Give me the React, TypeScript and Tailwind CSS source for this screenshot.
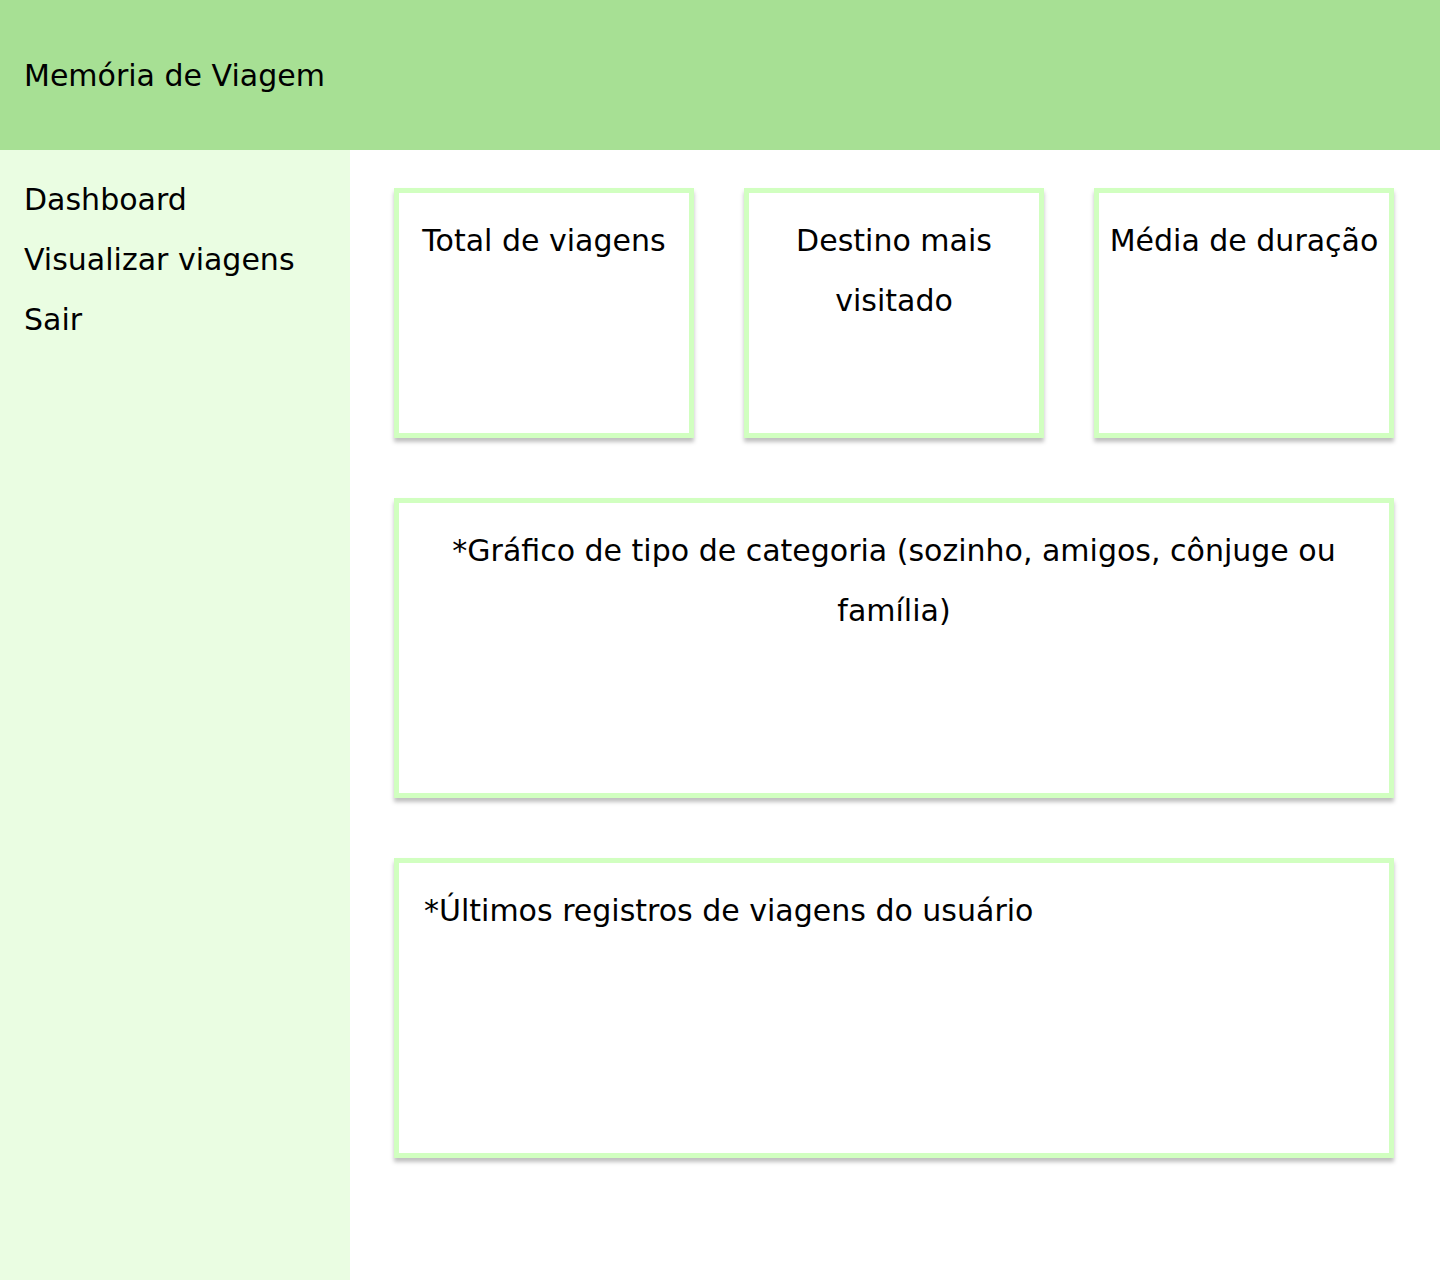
const cardBase =
  'bg-white border-[5px] border-[#d1ffc0] shadow-[0_4px_4px_rgba(0,0,0,0.25)]';

function StatCard({ title }: { title: string }) {
  return (
    <div className={`${cardBase} w-[300px] h-[250px] px-1 pt-[18px] text-center`}>
      <p className="text-[30px] leading-[60px]">{title}</p>
    </div>
  );
}

export default function App() {
  const navItems = ['Dashboard', 'Visualizar viagens', 'Sair'];

  return (
    <div
      className="min-h-[1280px] flex flex-col text-black"
      style={{ fontFamily: '"DejaVu Sans", "Noto Sans", sans-serif' }}
    >
      {/* Header */}
      <header className="h-[150px] bg-[#a7e094] flex items-center px-6 shrink-0">
        <h1 className="text-[30px] font-normal">Memória de Viagem</h1>
      </header>

      <div className="flex flex-1">
        {/* Sidebar */}
        <aside className="w-[350px] bg-[#eafde2] pt-5 px-6 shrink-0">
          <nav className="flex flex-col">
            {navItems.map((item) => (
              <a key={item} href="#" className="text-[30px] leading-[60px]">
                {item}
              </a>
            ))}
          </nav>
        </aside>

        {/* Main */}
        <main className="flex-1 pl-[44px] pt-[38px]">
          <div className="w-[1000px] flex flex-col gap-[60px]">
            <div className="flex justify-between">
              <StatCard title="Total de viagens" />
              <StatCard title="Destino mais visitado" />
              <StatCard title="Média de duração" />
            </div>

            <div className={`${cardBase} h-[300px] px-[45px] pt-[18px] text-center`}>
              <p className="text-[30px] leading-[60px]">
                *Gráfico de tipo de categoria (sozinho, amigos, cônjuge ou família)
              </p>
            </div>

            <div className={`${cardBase} h-[300px] px-[25px] pt-[18px]`}>
              <p className="text-[30px] leading-[60px]">
                *Últimos registros de viagens do usuário
              </p>
            </div>
          </div>
        </main>
      </div>
    </div>
  );
}
